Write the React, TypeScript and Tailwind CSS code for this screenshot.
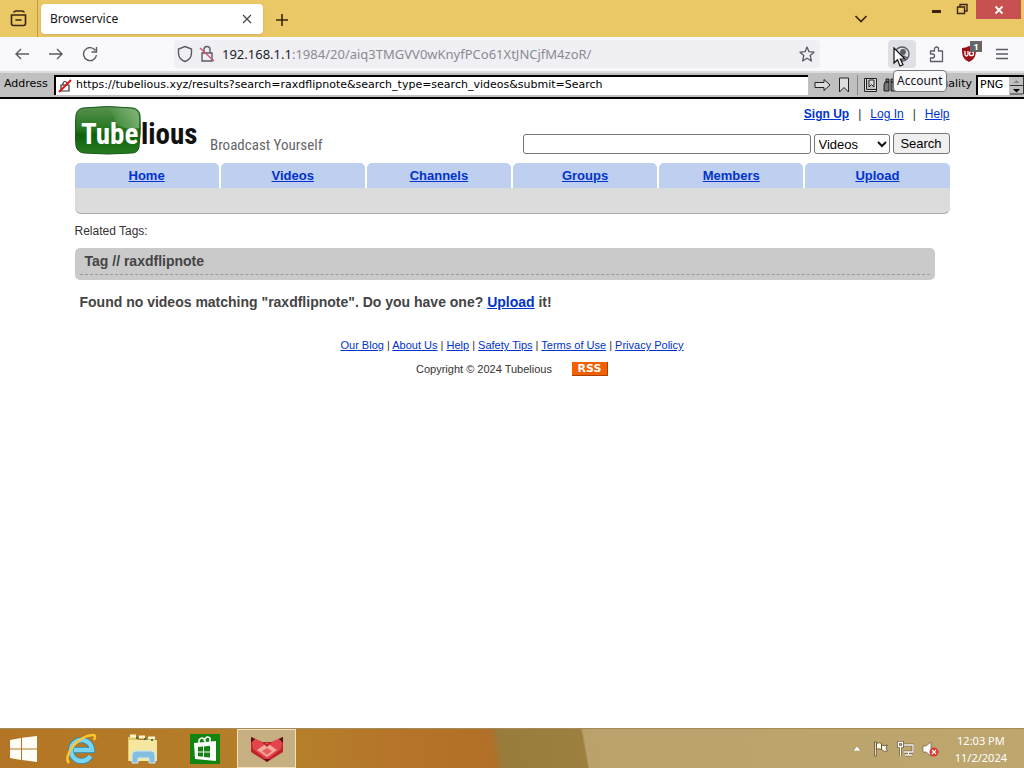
import React from "react";

const tabs = ["Home", "Videos", "Channels", "Groups", "Members", "Upload"];
const footerLinks = ["Our Blog", "About Us", "Help", "Safety Tips", "Terms of Use", "Privacy Policy"];
const link = "text-[#0033cc] underline";

function TabStrip() {
  return (
    <header className="flex h-[37px] items-start bg-[#ebc866] text-[#3a2410]">
      <button aria-label="Recent browsing" className="flex h-[37px] w-[38px] items-center justify-center border-r border-[#c49a4a]">
        <svg width="18" height="18" viewBox="0 0 18 18" fill="none" stroke="currentColor" strokeWidth="1.6" strokeLinecap="round">
          <path d="M4 2q1-1 2-1h6q1 0 2 1M1.500 5h14v8.500q0 2-2 2h-10q-2 0-2-2zM6 10h5" />
        </svg>
      </button>
      <div className="ml-[3px] mt-[4px] flex h-[30px] w-[222px] items-center justify-between rounded bg-white pl-[9px] pr-[10px] text-xs text-[#15141a] shadow-sm">
        <span>Browservice</span>
        <button aria-label="Close tab">
          <svg width="12" height="12" viewBox="0 0 12 12" stroke="#444" strokeWidth="1.2"><path d="M2 2l8 8M10 2l-8 8" /></svg>
        </button>
      </div>
      <button aria-label="New tab" className="ml-[12px] mt-[13px]">
        <svg width="14" height="14" viewBox="0 0 14 14" stroke="currentColor" strokeWidth="1.6"><path d="M7 1v12M1 7h12" /></svg>
      </button>
      <button aria-label="List all tabs" className="ml-auto mr-[63px] mt-[11px]">
        <svg width="16" height="16" viewBox="0 0 16 16" fill="none" stroke="currentColor" strokeWidth="1.6"><path d="M2.500 5l5.500 5.500L13.500 5" /></svg>
      </button>
      <button aria-label="Minimize" className="mr-[15px] mt-[10px] h-[3px] w-[9px] bg-[#3a2410]" />
      <button aria-label="Restore" className="mr-[8px] mt-[3px]">
        <svg width="12" height="12" viewBox="0 0 12 12" fill="none" stroke="currentColor" strokeWidth="1.400"><path d="M1.500 4h7v6.500h-7zM4 4V1.500h7V8H8.500" /></svg>
      </button>
      <button aria-label="Close window" className="mr-[3px] flex h-[19px] w-[45px] items-center justify-center bg-[#c75050]">
        <svg width="10" height="10" viewBox="0 0 10 10" stroke="#fff" strokeWidth="1.800"><path d="M1.500 1.500l7 7M8.500 1.500l-7 7" /></svg>
      </button>
    </header>
  );
}

function NavBar() {
  return (
    <nav className="flex h-[34px] items-center bg-[#f9f9fb] text-[#5b5b66]">
      <div className="flex w-[174px] items-center gap-[18px] pl-[14px]">
        <button aria-label="Back">
          <svg width="16" height="16" viewBox="0 0 16 16" fill="none" stroke="currentColor" strokeWidth="1.400"><path d="M15 8H2M7 3L2 8l5 5" /></svg>
        </button>
        <button aria-label="Forward">
          <svg width="16" height="16" viewBox="0 0 16 16" fill="none" stroke="currentColor" strokeWidth="1.400"><path d="M1 8h13M9 3l5 5-5 5" /></svg>
        </button>
        <button aria-label="Reload">
          <svg width="16" height="16" viewBox="0 0 16 16" fill="none" stroke="currentColor" strokeWidth="1.400"><path d="M13.500 4.500A6.500 6.500 0 1 0 14.500 9M14.500 1v5h-5" /></svg>
        </button>
      </div>
      <div className="flex h-[28px] min-w-0 flex-1 items-center rounded bg-[#f0f0f4] pl-[3px] pr-[5px]">
        <svg width="16" height="18" viewBox="0 0 16 18" fill="none" stroke="currentColor" strokeWidth="1.400"><path d="M8 1.500L14.500 4v4c0 4-2.500 7-6.500 8.500C4 15 1.500 12 1.500 8V4z" /></svg>
        <svg className="ml-[6px]" width="16" height="18" viewBox="0 0 16 18" fill="none" stroke="currentColor" strokeWidth="1.400">
          <path d="M3 8h10v8H3zM5 8V4.500a3 3 0 0 1 6 0V8" /><path d="M1 3l14 13" stroke="#d05070" />
        </svg>
        <span className="ml-[7px] flex-1 truncate pt-[2px] text-[13px] text-[#8a8a92]">
          <span className="text-[#202026]">192.168.1.1</span>:1984/20/aiq3TMGVV0wKnyfPCo61XtJNCjfM4zoR/
        </span>
        <button aria-label="Bookmark this page">
          <svg width="16" height="16" viewBox="0 0 16 16" fill="none" stroke="currentColor" strokeWidth="1.300" strokeLinejoin="round"><path d="M8 1l2 4.700 5 .5-3.800 3.300L12.400 15 8 12.200 3.600 15l1.200-5.500L1 6.200l5-.5z" /></svg>
        </button>
      </div>
      <div className="ml-[68px] flex items-center pr-[15px]">
        <button aria-label="Account" className="relative flex h-[28px] w-[28px] items-center justify-center rounded bg-[#dfdfe6]">
          <svg width="18" height="18" viewBox="0 0 18 18" fill="none" stroke="currentColor" strokeWidth="1.400">
            <circle cx="9" cy="9" r="7" /><circle cx="10" cy="7" r="2.200" fill="currentColor" /><path d="M5 13q4-4 9 0" />
          </svg>
          <svg className="absolute left-[5px] top-[7px] z-20" width="14" height="21" viewBox="0 0 14 21" fill="#fff" stroke="#111" strokeWidth="1.200"><path d="M1 1v15l3.500-3.300L7 19l3-1.300-2.700-5.700H12z" /></svg>
          <span role="tooltip" className="absolute left-[5px] top-[30px] z-10 h-[22px] rounded border border-[#77777b] bg-[#f9f9fb] px-[3px] text-[12px] leading-[20px] text-[#15141a]">Account</span>
        </button>
        <button aria-label="Extensions" className="ml-[12px]">
          <svg width="18" height="18" viewBox="0 0 18 18" fill="none" stroke="currentColor" strokeWidth="1.300" strokeLinejoin="round"><path d="M2.500 6h4V4a2 2 0 0 1 4 0v2h4v10.500h-12v-3.500h2a2 2 0 0 0 0-4h-2z" /></svg>
        </button>
        <button aria-label="uBlock Origin, 1 blocked" className="relative ml-[14px]">
          <svg width="18" height="18" viewBox="0 0 18 18"><path d="M9 1q3 2 7 2c0 8-1 11-7 14C3 14 2 11 2 3q4 0 7-2z" fill="#9c1018" /><path d="M5 6v3.500q0 1.500 1.500 1.500T8 9.500V6" stroke="#fff" fill="none" strokeWidth="1.300" /><circle cx="11.500" cy="8.700" r="2" stroke="#fff" fill="none" strokeWidth="1.300" /></svg>
          <span className="absolute -top-[4px] left-[10px] h-[11px] w-[12px] bg-[#666] text-center text-[9px] font-bold leading-[11px] text-white">1</span>
        </button>
        <button aria-label="Open menu" className="ml-[17px]">
          <svg width="14" height="14" viewBox="0 0 14 14" stroke="currentColor" strokeWidth="1.300"><path d="M1 2.500h12M1 7h12M1 11.500h12" /></svg>
        </button>
      </div>
    </nav>
  );
}

function AddressBar() {
  return (
    <div className="flex h-[28px] items-center border-b-2 border-t-2 border-b-black border-t-[#dcdcdc] bg-[#c0c0c0] pb-[1px] font-['DejaVu_Sans',sans-serif] text-[11px] text-black">
      <label htmlFor="address" className="w-[54px] pl-[4px]">Address</label>
      <div className="flex h-[20px] min-w-0 flex-1 items-center border-l-2 border-t-2 border-black bg-white">
        <svg className="ml-[2px] shrink-0" width="14" height="14" viewBox="0 0 14 14" fill="none" stroke="#333" strokeWidth="1.200"><path d="M3 6h8v6H3zM5 6V4q2-3 4 0v2" /><path d="M1 13L13 1" stroke="#d81818" strokeWidth="2" /></svg>
        <input id="address" readOnly className="ml-[4px] h-[16px] min-w-0 flex-1 bg-transparent" value="https://tubelious.xyz/results?search=raxdflipnote&search_type=search_videos&submit=Search" />
      </div>
      <div className="flex items-center gap-[7px] pl-[6px]">
        <button aria-label="Go"><svg width="17" height="14" viewBox="0 0 17 14" fill="#ddd" stroke="#222"><path d="M1 4.500h9v-3l6 5.500-6 5.500v-3H1z" /></svg></button>
        <button aria-label="Add bookmark"><svg width="12" height="16" viewBox="0 0 12 16" fill="#ddd" stroke="#222"><path d="M1.500 1h9v14L6 10.500 1.500 15z" /></svg></button>
      </div>
      <div className="ml-[7px] flex h-[20px] items-center gap-[5px] border-l border-[#888] pl-[5px]">
        <button aria-label="Bookmarks"><svg width="15" height="16" viewBox="0 0 15 16" fill="#ddd" stroke="#222"><path d="M1.500 1.500h12v13h-12zM3.500 1.500v11h10M6 3h5v7L8.500 7.500 6 10z" /></svg></button>
        <button aria-label="Find"><svg width="15" height="16" viewBox="0 0 15 16" fill="#777" stroke="#222"><path d="M2 5h4v9H1V8zM8 5h4l1 3v6H8zM3 2h3v3H3zM8 2h3v3H8z" /></svg></button>
        <button aria-label="Download"><svg width="15" height="16" viewBox="0 0 15 16" fill="#ddd" stroke="#222"><path d="M1 9h13v5H1zM7.500 1v7" /></svg></button>
      </div>
      <label htmlFor="quality" className="ml-[6px] w-[48px] text-right">Quality</label>
      <div className="ml-[4px] flex h-[20px] w-[48px] border-l-2 border-t-2 border-black bg-white">
        <select id="quality" className="min-w-0 flex-1 appearance-none pl-[2px]"><option>PNG</option></select>
        <svg className="shrink-0" width="15" height="18" viewBox="0 0 15 18"><path d="M0 0h15v18H0z" fill="#c0c0c0" /><path d="M1 8.500h13M1 17h13M14.500 0v17" stroke="#333" /><path d="M4.500 6l3-3 3 3z" fill="#888" /><path d="M4 12l3.500 3.500L11 12z" fill="#000" /></svg>
      </div>
    </div>
  );
}

function Logo() {
  return (
    <a href="#" aria-label="Tubelious home" className="shrink-0">
      <svg width="260" height="50" viewBox="0 0 260 50">
        <defs>
          <linearGradient id="green" x1="0" y1="0" x2="0" y2="1"><stop offset="0" stopColor="#56914d" /><stop offset=".45" stopColor="#287823" /><stop offset=".6" stopColor="#0e600d" /><stop offset="1" stopColor="#287c22" /></linearGradient>
          <linearGradient id="gloss" x1="0" y1="0" x2="1" y2="0"><stop offset="0" stopColor="#b8dfb0" stopOpacity="0" /><stop offset="1" stopColor="#b8dfb0" stopOpacity=".5" /></linearGradient>
        </defs>
        <path d="M8 3Q32 0 58 3q6 1 7 7 1 16-1 32-1 6-7 6-24 2-48 0-7-1-8-7-2-16 0-31 1-6 7-7z" fill="url(#green)" stroke="#17591a" />
        <path d="M32 3q15-1 25 1 6 1 7 7v12Q43 26 40 15 38 7 32 3z" fill="url(#gloss)" />
        <g fontFamily="'Roboto Condensed','Liberation Sans',sans-serif" fontWeight="700">
          <text x="6" y="39" fontSize="29" fill="#fff">Tube</text>
          <text x="66" y="39" fontSize="29" fill="#111">lious</text>
        </g>
        <text x="135" y="45" fontSize="15" fill="#666" fontFamily="'Roboto Condensed','Liberation Sans',sans-serif">Broadcast Yourself</text>
      </svg>
    </a>
  );
}

function Site() {
  return (
    <main className="flex-1 bg-white px-4 pt-[6px] font-['Liberation_Sans',Arial,sans-serif] text-[#333]">
      <div className="mx-auto max-w-[875px]">
        <div className="flex items-start justify-between">
          <Logo />
          <div className="flex flex-col items-end">
            <div className="flex h-[18px] items-center gap-[9px] text-xs leading-[18px]">
              <a href="#" className={`${link} font-bold`}>Sign Up</a><span>|</span>
              <a href="#" className={link}>Log In</a><span>|</span>
              <a href="#" className={link}>Help</a>
            </div>
            <form className="mt-[10px] flex items-center gap-[3px] text-[13px] text-black" onSubmit={(e) => e.preventDefault()}>
              <input aria-label="Search terms" className="h-[20px] w-[288px] rounded-[3px] border border-[#767676] px-1" />
              <span className="relative flex items-center">
                <select aria-label="Search type" className="h-[20px] w-[76px] appearance-none rounded-[3px] border border-[#767676] bg-white pl-[4px]">
                  <option>Videos</option><option>Members</option>
                </select>
                <svg className="pointer-events-none absolute right-[3px]" width="10" height="8" viewBox="0 0 10 8" fill="none" stroke="#111" strokeWidth="2"><path d="M1 2l4 4 4-4" /></svg>
              </span>
              <button className="h-[21px] w-[57px] rounded-[3px] border border-[#767676] bg-[#efefef]">Search</button>
            </form>
          </div>
        </div>
        <nav className="mt-[8px] grid grid-cols-6 gap-x-[2px] text-center text-[13px] font-bold leading-[25px]">
          {tabs.map((t) => <div key={t} className="h-[25px] rounded-t-[5px] bg-[#bfcfef]"><a href="#" className={link}>{t}</a></div>)}
        </nav>
        <div className="h-[26px] rounded-b-[6px] border-b border-[#aaa] bg-[#dcdcdc]" />
        <p className="mt-[9px] text-xs leading-[16px]">Related Tags:</p>
        <h1 className="mr-[15px] mt-[9px] h-[32px] rounded-[5px] bg-[#cacaca] px-[5px] text-sm font-bold text-[#444]">
          <span className="block h-[27px] border-b border-dashed border-[#999] pl-[5px] leading-[27px]">Tag // raxdflipnote</span>
        </h1>
        <p className="mt-[12px] pl-[5px] text-sm font-bold leading-[20px] text-[#444]">
          Found no videos matching "raxdflipnote". Do you have one? <a href="#" className={link}>Upload</a> it!
        </p>
        <footer className="mt-[25px] text-center text-[11px] leading-[16px]">
          <div>
            {footerLinks.map((t, i) => <React.Fragment key={t}>{i > 0 && " | "}<a href="#" className={link}>{t}</a></React.Fragment>)}
          </div>
          <div className="mt-[8px] flex items-center justify-center gap-[20px]">
            <span>Copyright © 2024 Tubelious</span>
            <a href="#" className="h-[14px] w-[36px] border-b border-r border-[#a84000] bg-[#f26000] font-['DejaVu_Sans',sans-serif] font-bold leading-[14px] text-white">RSS</a>
          </div>
        </footer>
      </div>
    </main>
  );
}

function Taskbar() {
  return (
    <footer className="flex h-[40px] items-stretch border-t border-[#a48b5c] bg-[linear-gradient(80deg,#b37525_0%,#b5802a_29%,#b5752a_38%,#b26f27_48%,#987c3c_49%,#9d8040_57%,#bba26c_57.2%,#bea66f_100%)] text-white">
      <button aria-label="Start" className="flex w-[48px] items-center justify-center">
        <svg width="28" height="26" viewBox="0 0 28 26" fill="#fffdf5"><path d="M0 4l11-2v10.500H0zM12 1.800L27 0v12.500H12zM0 13.500h11V24L0 22zM12 13.500h15V26l-15-2z" /></svg>
      </button>
      <button aria-label="Internet Explorer" className="flex w-[66px] items-center justify-center">
        <svg width="34" height="34" viewBox="0 0 34 34" fill="none"><path d="M26.500 24A10.500 10.500 0 1 1 28 18H10" stroke="#2388b5" strokeWidth="6" /><path d="M26.500 24A10.500 10.500 0 1 1 28 18H10" stroke="#7ad4f2" strokeWidth="4.500" /><path d="M5 31C-2 24 15 2 30 3c2 1 1 3 0 5" stroke="#ffc52b" strokeWidth="2.500" /></svg>
      </button>
      <button aria-label="File Explorer" className="flex w-[58px] items-center justify-center">
        <svg width="34" height="32" viewBox="0 0 34 32"><path d="M2 4h8l2 3h19v21H2z" fill="#e1c869" /><path d="M3 7h28v21H3z" fill="#f5e6a0" /><path d="M4 3h6M13 4h6M22 5h7" stroke="#fff6cd" strokeWidth="3" /><path d="M10 5h2M18 6h2M25 7h2" stroke="#38784f" strokeWidth="2" /><path d="M6 30V22q0-4 4-4h15q4 0 4 4v8h-6v-5H12v5z" fill="#83bede" stroke="#c9e9f3" /></svg>
      </button>
      <button aria-label="Store" className="flex w-[65px] items-center justify-center">
        <svg width="30" height="30" viewBox="0 0 30 30"><path d="M0 0h30v30H0z" fill="#118411" /><path d="M4 9l22-2v20L5 25z" fill="#fff" /><path d="M9 9V6q3-4 6 0v2M14 7q2-6 6-3v4" fill="none" stroke="#fff" strokeWidth="1.500" /><path d="M8 13l5-.5v5H8zm6-.6l6-.6v5.700h-6zM8 18.500h5v4.300l-5-.5zm6 0h6v5l-6-.6z" fill="#118411" /></svg>
      </button>
      <button aria-label="Browser" className="flex w-[59px] items-center justify-center border border-[#f2e1bc] bg-[#c6af80]">
        <svg width="34" height="28" viewBox="0 0 34 28"><path d="M1 2l11 5h10l11-5v15L17 27 1 17z" fill="#bd252b" /><path d="M1 2l11 5 5 5 5-5 11-5-2 12-14 11L3 14z" fill="#e4444b" /><path d="M7 15l10-7 10 7-10 7z" fill="#f5a89c" /><path d="M12 7l5 5 5-5-5 2z" fill="#bd252b" /><path d="M12 16l5-3 5 3-5 4z" fill="#e4605f" /><path d="M14 24h6l-3 3zM1 2l4 2-4 4zM33 2l-4 2 4 4z" fill="#521116" /></svg>
      </button>
      <div className="ml-auto flex items-center gap-[8px] pr-[17px]">
        <button aria-label="Show hidden icons"><svg width="8" height="5" viewBox="0 0 8 5" fill="#fff" stroke="#6b5a3a" strokeWidth=".4"><path d="M0 5l4-5 4 5z" /></svg></button>
        <svg className="ml-[4px]" width="16" height="16" viewBox="0 0 16 16" fill="#fffbea" stroke="#5b4a2a" strokeWidth=".8"><path d="M1.500 1h1.800v14H1.500zM3.500 2.500q3-1.500 5 0v6q-3-1.500-5 0zM8.500 4q3 1.500 6 0l-1.500 3 1.500 3q-3 1.500-6-1.500z" /></svg>
        <svg width="17" height="16" viewBox="0 0 17 16" fill="none"><path d="M7 4h9v7H6.500M8 14h7M11.500 11v3M3.500 6v9M1.500 1.500h4v4h-4z" stroke="#5b4a2a" strokeWidth="2.600" /><path d="M7 4h9v7H6.500M8 14h7M11.500 11v3M3.500 6v9M1.500 1.500h4v4h-4z" stroke="#fff" strokeWidth="1.300" /></svg>
        <svg width="17" height="16" viewBox="0 0 17 16"><path d="M1 5h3l5-4v14l-5-4H1z" fill="#fff" stroke="#5b4a2a" strokeWidth=".6" /><circle cx="12" cy="11" r="4.500" fill="#d93a31" /><path d="M10 9l4 4M14 9l-4 4" stroke="#fff" strokeWidth="1.300" /></svg>
        <time className="ml-[8px] text-center text-[11px] leading-[17px]"><span className="block">12:03 PM</span><span className="block">11/2/2024</span></time>
      </div>
    </footer>
  );
}

export default function App() {
  return (
    <div className="flex min-h-screen flex-col font-['Noto_Sans',sans-serif]">
      <TabStrip />
      <NavBar />
      <AddressBar />
      <Site />
      <Taskbar />
    </div>
  );
}
